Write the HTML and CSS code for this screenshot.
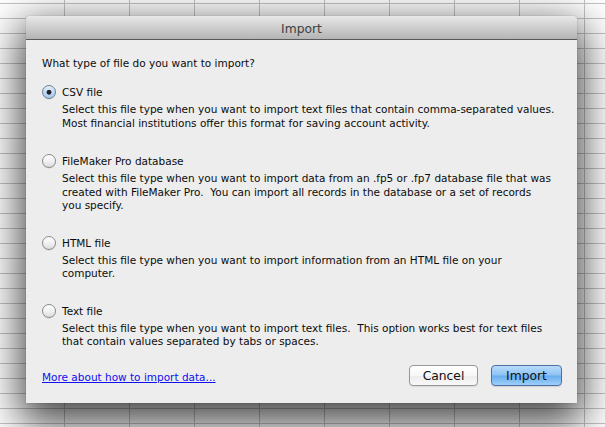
FILE: index.html
```html
<!DOCTYPE html>
<html>
<head>
<meta charset="utf-8">
<title>Import</title>
<link rel="stylesheet" href="styles.css">
</head>
<body>
<div class="desk">
  <div class="dialog">
    <div class="titlebar">Import</div>
    <div class="content">
      <div class="question">What type of file do you want to import?</div>
      <div class="options">
        <div class="option first">
          <div class="choice"><span class="radio on"></span><span class="label">CSV file</span></div>
          <div class="desc">Select this file type when you want to import text files that contain comma-separated values.<br>Most financial institutions offer this format for saving account activity.</div>
        </div>
        <div class="option">
          <div class="choice"><span class="radio"></span><span class="label">FileMaker Pro database</span></div>
          <div class="desc">Select this file type when you want to import data from an .fp5 or .fp7 database file that was<br>created with FileMaker Pro.&nbsp; You can import all records in the database or a set of records<br>you specify.</div>
        </div>
        <div class="option">
          <div class="choice"><span class="radio"></span><span class="label">HTML file</span></div>
          <div class="desc">Select this file type when you want to import information from an HTML file on your<br>computer.</div>
        </div>
        <div class="option">
          <div class="choice"><span class="radio"></span><span class="label">Text file</span></div>
          <div class="desc">Select this file type when you want to import text files.&nbsp; This option works best for text files<br>that contain values separated by tabs or spaces.</div>
        </div>
      </div>
      <div class="footer">
        <a class="help" href="#">More about how to import data...</a>
        <div class="buttons">
          <span class="btn cancel">Cancel</span>
          <span class="btn default">Import</span>
        </div>
      </div>
    </div>
  </div>
</div>
</body>
</html>
```
FILE: styles.css
```css
html, body {
  margin: 0;
  padding: 0;
  height: 100%;
}
body {
  background-color: #ffffff;
  background-image:
    linear-gradient(to right, #c4c4c4 1px, transparent 1px),
    linear-gradient(to bottom, #c4c4c4 1px, transparent 1px);
  background-size: 65px 15px;
  background-position: 64px 3px;
  overflow: hidden;
  font-family: "DejaVu Sans", "Liberation Sans", sans-serif;
}
.desk {
  padding-top: 16px;
  padding-left: 26px;
}
.dialog {
  width: 551px;
  height: 387px;
  background: #ededed;
  border-radius: 4px 4px 0 0;
  box-shadow: 0 14px 40px 6px rgba(0, 0, 0, 0.72), 0 0 1px rgba(0,0,0,0.5);
  display: flex;
  flex-direction: column;
}
.titlebar {
  height: 24px;
  box-sizing: border-box;
  border-radius: 4px 4px 0 0;
  background: linear-gradient(to bottom, #e9e9e9 0%, #d3d3d3 40%, #b4b4b4 100%);
  border-bottom: 1px solid #595959;
  text-align: center;
  font-size: 12.3px;
  line-height: 26px;
  color: #404040;
}
.content {
  flex: 1;
  display: flex;
  flex-direction: column;
  padding: 16px 15px 17px 16px;
  font-size: 10.5px;
  color: #0c0c0c;
}
.question {
  line-height: 14px;
  height: 14px;
}
.options {
  display: flex;
  flex-direction: column;
  gap: 23px;
  margin-top: 15px;
}
.option.first {
  margin-bottom: 1px;
}
.choice {
  display: flex;
  align-items: center;
  gap: 6px;
  height: 14px;
}
.radio {
  width: 14px;
  height: 14px;
  box-sizing: border-box;
  border-radius: 50%;
  border: 1px solid #8b8b8b;
  background: linear-gradient(to bottom, #ffffff 0%, #f2f2f2 50%, #dcdcdc 100%);
  box-shadow: 0 0.5px 0.5px rgba(0,0,0,0.15);
  flex: none;
}
.radio.on {
  border-color: #6a7f99;
  background:
    radial-gradient(circle at 50% 52%, #1c232c 0, #1c232c 2px, rgba(28,35,44,0) 2.8px),
    linear-gradient(to bottom, #e4eef9 0%, #c4d9ef 50%, #a9c7e8 100%);
}
.label {
  line-height: 14px;
}
.desc {
  margin-top: 4px;
  padding-left: 20px;
  line-height: 13.5px;
  white-space: nowrap;
}
.footer {
  margin-top: auto;
  display: flex;
  align-items: center;
  justify-content: space-between;
  height: 21px;
}
.help {
  color: #0f0ff0;
  text-decoration: underline;
  font-size: 10.5px;
  margin-top: 2px;
}
.buttons {
  display: flex;
  gap: 13px;
}
.btn {
  height: 21px;
  box-sizing: border-box;
  display: flex;
  align-items: center;
  justify-content: center;
  font-size: 12.3px;
  color: #111;
  border-radius: 4px;
}
.cancel {
  width: 69px;
  border: 1px solid #979797;
  background: linear-gradient(to bottom, #ffffff 0%, #f7f7f7 50%, #ececec 52%, #f9f9f9 100%);
  box-shadow: 0 1px 1px rgba(0,0,0,0.08);
}
.default {
  width: 71px;
  border: 1px solid #4f6fa3;
  background: linear-gradient(to bottom, #b8dbfb 0%, #8ec3f4 48%, #68acef 52%, #9dd0f9 100%);
  box-shadow: 0 1px 1px rgba(0,0,0,0.12);
}
```
